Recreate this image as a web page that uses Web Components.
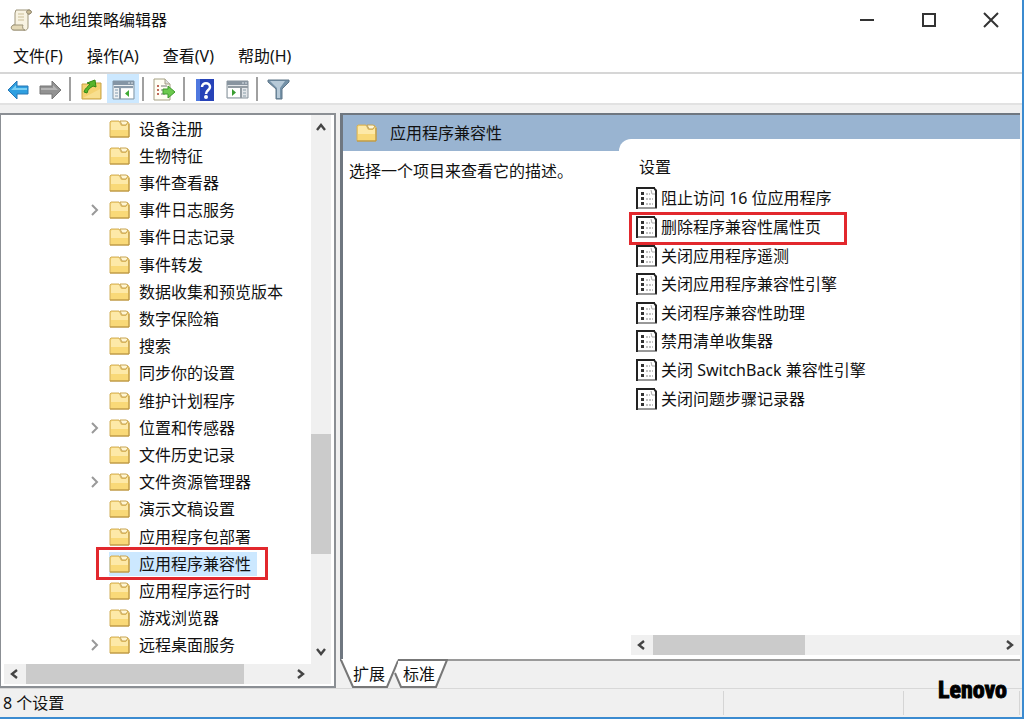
<!DOCTYPE html>
<html lang="zh-CN">
<head>
<meta charset="utf-8">
<title>本地组策略编辑器</title>
<style>
    body {
        margin: 0;
        font-family: 'Noto Sans', 'Noto Sans CJK SC', sans-serif;
        font-size: 16px;
        line-height: 24px;
        color: #111;
    }
</style>
</head>
<body>
<policy-window>
    <title-bar slot="title">本地组策略编辑器</title-bar>
    <menu-bar slot="menu"></menu-bar>
    <tool-bar slot="tools"></tool-bar>
    <tree-panel slot="tree">
        <tree-item>设备注册</tree-item>
        <tree-item>生物特征</tree-item>
        <tree-item>事件查看器</tree-item>
        <tree-item expandable>事件日志服务</tree-item>
        <tree-item>事件日志记录</tree-item>
        <tree-item>事件转发</tree-item>
        <tree-item>数据收集和预览版本</tree-item>
        <tree-item>数字保险箱</tree-item>
        <tree-item>搜索</tree-item>
        <tree-item>同步你的设置</tree-item>
        <tree-item>维护计划程序</tree-item>
        <tree-item expandable>位置和传感器</tree-item>
        <tree-item>文件历史记录</tree-item>
        <tree-item expandable>文件资源管理器</tree-item>
        <tree-item>演示文稿设置</tree-item>
        <tree-item>应用程序包部署</tree-item>
        <tree-item selected>应用程序兼容性</tree-item>
        <tree-item>应用程序运行时</tree-item>
        <tree-item>游戏浏览器</tree-item>
        <tree-item expandable>远程桌面服务</tree-item>
    </tree-panel>
    <detail-panel slot="detail">
        <span slot="heading">应用程序兼容性</span>
        <span slot="description">选择一个项目来查看它的描述。</span>
        <span slot="column">设置</span>
        <setting-item>阻止访问 16 位应用程序</setting-item>
        <setting-item marked>删除程序兼容性属性页</setting-item>
        <setting-item>关闭应用程序遥测</setting-item>
        <setting-item>关闭应用程序兼容性引擎</setting-item>
        <setting-item>关闭程序兼容性助理</setting-item>
        <setting-item>禁用清单收集器</setting-item>
        <setting-item>关闭 SwitchBack 兼容性引擎</setting-item>
        <setting-item>关闭问题步骤记录器</setting-item>
    </detail-panel>
    <status-bar slot="status">8 个设置</status-bar>
</policy-window>

<script>
const folderIcon = `
    <svg width="22" height="20" viewBox="0 0 22 20" aria-hidden="true">
        <path d="M1 3l1-1h8l2 4h5l1-3 2 1v14H1z" fill="#f9d978" stroke="#d3b05c"/>
        <path d="M11 2h6l2 1-2 3h-4z" fill="#fff6d4" stroke="#c9a44f"/>
        <path d="M2 4l1-1h7l2 4h5l2-2v6H2z" fill="#fde9a8"/>
        <path d="M1 18h19V5" stroke="#b8923f" fill="none"/>
    </svg>`;

const arrowPaths = {
    up: 'M2 8l4-5 4 5',
    down: 'M2 4l4 5 4-5',
    left: 'M8 2L3 6l5 4',
    right: 'M4 2l5 4-5 4'
};

function arrowIcon(dir) {
    return `<svg width="12" height="12" viewBox="0 0 12 12" aria-hidden="true"><path d="${arrowPaths[dir]}" fill="none" stroke="#444" stroke-width="2.4"/></svg>`;
}

function render(el, html) {
    const template = document.createElement('template');
    template.innerHTML = html;
    el.attachShadow({ mode: 'open' });
    el.shadowRoot.appendChild(template.content.cloneNode(true));
}

class PolicyWindow extends HTMLElement {
    constructor() {
        super();
        render(this, `
            <style>
                :host {
                    display: flex;
                    flex-direction: column;
                    box-sizing: border-box;
                    min-height: 100vh;
                    background: #fff;
                    border-right: 2px solid #3b8bd0;
                    border-bottom: 2px solid #3b8bd0;
                }
                main {
                    flex: 1;
                    display: grid;
                    grid-template-columns: 336px 1fr;
                    gap: 4px;
                    padding: 8px 2px 0 0;
                    background: #f0f0f0;
                    border-top: 2px solid #e2e2e2;
                }
            </style>
            <slot name="title"></slot>
            <slot name="menu"></slot>
            <slot name="tools"></slot>
            <main>
                <slot name="tree"></slot>
                <slot name="detail"></slot>
            </main>
            <slot name="status"></slot>
        `);
    }
}

class TitleBar extends HTMLElement {
    constructor() {
        super();
        render(this, `
            <style>
                :host {
                    display: flex;
                    align-items: center;
                    height: 40px;
                    padding-left: 10px;
                }
                h1 {
                    flex: 1;
                    margin: 0 0 0 6px;
                    font-size: 16px;
                    font-weight: normal;
                }
                button {
                    width: 62px;
                    height: 38px;
                    padding: 0;
                    border: 0;
                    background: none;
                }
                button svg { display: block; margin: auto; }
            </style>
            <svg width="23" height="22" viewBox="0 0 23 22" aria-hidden="true">
                <path d="M6 1h13c3 0 3 4 0 4h-1v13c0 3-3 4-5 3H4c-4 0-3-5 0-5h1V4z" fill="#f8f3e2" stroke="#9d9479"/>
                <path d="M18 5c-2-1-2-4 1-4 3 0 3 4 0 4z" fill="#c9bb95" stroke="#8d846b"/>
                <path d="M4 16h9c-1 2 0 5 2 5H4c-4 0-3-5 0-5z" fill="#e4d9b7" stroke="#9d9479"/>
                <path d="M8 5h6M8 8h6M8 11h6" stroke="#cbbf99"/>
            </svg>
            <h1><slot></slot></h1>
            <button aria-label="最小化"><svg width="16" height="16" viewBox="0 0 16 16"><path d="M1 8h14" stroke="#333" stroke-width="2"/></svg></button>
            <button aria-label="最大化"><svg width="16" height="16" viewBox="0 0 16 16"><path d="M2 2h12v12H2z" fill="none" stroke="#333" stroke-width="2"/></svg></button>
            <button aria-label="关闭"><svg width="16" height="16" viewBox="0 0 16 16"><path d="M1 1l14 14M15 1L1 15" stroke="#333" stroke-width="2"/></svg></button>
        `);
    }
}

class MenuBar extends HTMLElement {
    constructor() {
        super();
        render(this, `
            <style>
                :host { display: block; }
                nav {
                    display: flex;
                    gap: 24px;
                    height: 32px;
                    padding-left: 13px;
                    border-bottom: 2px solid #d6d6d6;
                }
                button {
                    padding: 0;
                    height: 32px;
                    border: 0;
                    background: none;
                    font: inherit;
                    color: inherit;
                }
            </style>
            <nav>
                <button>文件(F)</button>
                <button>操作(A)</button>
                <button>查看(V)</button>
                <button>帮助(H)</button>
            </nav>
        `);
    }
}

class ToolBar extends HTMLElement {
    constructor() {
        super();
        render(this, `
            <style>
                :host {
                    display: flex;
                    align-items: center;
                    height: 29px;
                    padding-left: 2px;
                }
                button {
                    display: grid;
                    place-items: center;
                    width: 32px;
                    height: 29px;
                    padding: 2px 0 0;
                    border: 0;
                    background: none;
                }
                button.active { background: #cce8ff; }
                i {
                    width: 2px;
                    height: 24px;
                    margin: 0 4px 0 3px;
                    background: #a0a0a0;
                }
            </style>
            <button aria-label="后退"><svg width="22" height="20" viewBox="0 0 22 20"><path d="M1 10l9-9v5h11v8H10v5z" fill="#2f9fe0" stroke="#2777b5"/><path d="M4 10l5-5v3h11v2z" fill="#7bd0f5"/></svg></button>
            <button aria-label="前进"><svg width="23" height="20" viewBox="0 0 23 20"><path d="M22 10l-9-9v5H1v8h12v5z" fill="#929292" stroke="#777"/><path d="M19 10l-5-5v3H2v2z" fill="#b5b5b5"/></svg></button>
            <i></i>
            <button aria-label="上移一级"><svg width="21" height="21" viewBox="0 0 21 21"><path d="M1 5h8l2 2 3-3h6v16H1z" fill="#f4d271" stroke="#c7a349"/><path d="M2 19L19 10v9z" fill="#f8df8f"/><path d="M3 13c1-4 4-5 6-8L6 4l8-3 1 7-3-1c-3 2-5 3-6 7z" fill="#57b52b" stroke="#338915"/></svg></button>
            <button class="active" aria-label="显示控制台树"><svg width="23" height="21" viewBox="0 0 23 21"><path d="M1 2h21v18H1z" fill="#eef1f3" stroke="#8196a6"/><path d="M1 2h21v4H1z" fill="#8495a5"/><path d="M16 4h2M19 4h2" stroke="#dce4ea"/><path d="M2 8h19M8 8v12" stroke="#8b9baa" stroke-width="2"/><path d="M3 11h3M3 14h3M3 17h3" stroke="#819bb1"/><path d="M9 10h12v9H9z" fill="#fff"/><path d="M17 11v7l-4-3.500z" fill="#3eaa35"/></svg></button>
            <i></i>
            <button aria-label="导出列表"><svg width="24" height="23" viewBox="0 0 24 23"><path d="M2 1h11l5 5v16H2z" fill="#fffef3" stroke="#a5a084"/><path d="M13 1v5h5" fill="#ddd" stroke="#a5a084"/><path d="M5 8h2M5 12h2M5 16h2" stroke="#c06a5a" stroke-width="2"/><path d="M9 8h6M9 12h4M9 16h4" stroke="#777"/><path d="M11 11h5V8l7 6-7 6v-4h-5z" fill="#6cc94e" stroke="#3f9a2d"/></svg></button>
            <i></i>
            <button aria-label="帮助"><svg width="18" height="22" viewBox="0 0 18 22"><path d="M0 0h18v22H0z" fill="#2743b8"/><path d="M0 0h4v22H0z" fill="#4f78df"/><path d="M6 8c0-5 8-5 8 0 0 3-4 3-4 7" fill="none" stroke="#fff" stroke-width="2.500"/><circle cx="10" cy="18" r="2" fill="#fff"/></svg></button>
            <button aria-label="显示操作窗格"><svg width="23" height="19" viewBox="0 0 23 19"><path d="M1 1h21v17H1z" fill="#e3e6e9" stroke="#87939b"/><path d="M1 1h21v4H1z" fill="#8995a0"/><path d="M16 3h2M19 3h2" stroke="#dce4ea"/><path d="M2 7h20M15 7v11" stroke="#929ba2" stroke-width="2"/><path d="M17 10h3M17 13h3M17 16h3" stroke="#899da8"/><path d="M2 8h12v9H2z" fill="#fff"/><path d="M6 9v7l4-3.500z" fill="#3b9d31"/></svg></button>
            <i></i>
            <button aria-label="筛选"><svg width="23" height="21" viewBox="0 0 23 21"><path d="M1 1h21v2l-7 7v10H9V10L1 3z" fill="#7592a8" stroke="#5f7789"/><path d="M3 2h15l-5 7v10h-3V9z" fill="#b7cad8"/></svg></button>
        `);
    }
}

class ScrollTrack extends HTMLElement {
    constructor() {
        super();
        const vertical = this.hasAttribute('vertical');
        const start = this.getAttribute('start');
        const size = this.getAttribute('size');
        render(this, `
            <style>
                :host {
                    display: flex;
                    flex-direction: ${vertical ? 'column' : 'row'};
                    background: #f0f0f0;
                }
                button {
                    display: grid;
                    place-items: center;
                    flex: 0 0 ${vertical ? 26 : 22}px;
                    padding: 0;
                    border: 0;
                    background: none;
                }
                .before { flex: ${start} 0 0; }
                .thumb { flex: ${size} 0 0; background: #cbcbcb; }
                .after { flex: ${100 - start - size} 0 0; }
            </style>
            <button aria-label="${vertical ? '向上滚动' : '向左滚动'}">${arrowIcon(vertical ? 'up' : 'left')}</button>
            <div class="before"></div>
            <div class="thumb"></div>
            <div class="after"></div>
            <button aria-label="${vertical ? '向下滚动' : '向右滚动'}">${arrowIcon(vertical ? 'down' : 'right')}</button>
        `);
    }
}

class TreePanel extends HTMLElement {
    constructor() {
        super();
        render(this, `
            <style>
                :host {
                    display: grid;
                    grid-template: 1fr 20px / 1fr 20px;
                    padding: 0 3px 2px 3px;
                    background: #fff;
                    border: 2px solid #8b8f94;
                    border-left-width: 1px;
                }
                .items {
                    display: grid;
                    grid-auto-rows: 1fr;
                    padding: 0 0 5px 84px;
                }
                .corner { background: #f0f0f0; }
            </style>
            <div class="items" role="tree"><slot></slot></div>
            <scroll-track vertical start="59" size="24"></scroll-track>
            <scroll-track start="0" size="83"></scroll-track>
            <div class="corner"></div>
        `);
    }
}

class TreeItem extends HTMLElement {
    constructor() {
        super();
        const toggle = this.hasAttribute('expandable')
            ? '<button class="toggle" aria-label="展开"><svg width="9" height="12" viewBox="0 0 9 12"><path d="M2 1l5 5-5 5" fill="none" stroke="#999" stroke-width="2"/></svg></button>'
            : '<span></span>';
        render(this, `
            <style>
                :host {
                    position: relative;
                    display: grid;
                    grid-template-columns: 21px max-content;
                    align-items: center;
                }
                button {
                    padding: 0;
                    border: 0;
                    background: none;
                    font: inherit;
                    color: inherit;
                }
                .toggle { display: flex; padding-left: 2px; }
                .label {
                    display: flex;
                    align-items: center;
                    gap: 8px;
                    padding-right: 6px;
                }
                :host([selected]) .label { background: #cce8ff; }
                :host([selected])::after {
                    content: '';
                    position: absolute;
                    left: 8px;
                    top: -3px;
                    bottom: -3px;
                    width: 166px;
                    border: 3px solid #e2282d;
                    pointer-events: none;
                }
            </style>
            ${toggle}
            <button class="label">${folderIcon}<slot></slot></button>
        `);
    }
    connectedCallback() {
        this.setAttribute('role', 'treeitem');
    }
}

class DetailPanel extends HTMLElement {
    constructor() {
        super();
        render(this, `
            <style>
                :host {
                    display: flex;
                    flex-direction: column;
                    min-width: 0;
                }
                .frame {
                    flex: 1;
                    display: grid;
                    grid-template: 24px 12px 1fr / 276px 1fr;
                    background: #fff;
                    border: 2px solid #6f7780;
                    border-width: 2px 0 2px 3px;
                    border-bottom-color: #9a9a9a;
                }
                .band {
                    grid-area: 1 / 1 / 3 / 3;
                    background: #99b4d1;
                }
                header {
                    grid-area: 1 / 1 / 3 / 2;
                    display: flex;
                    align-items: center;
                    gap: 12px;
                    padding-left: 13px;
                }
                h2 {
                    margin: 0;
                    font-size: 16px;
                    font-weight: normal;
                }
                p {
                    grid-area: 3 / 1;
                    margin: 8px 0 0 6px;
                }
                section {
                    grid-area: 2 / 2 / 4 / 3;
                    display: flex;
                    flex-direction: column;
                    padding-bottom: 4px;
                    background: #fff;
                    border-top-left-radius: 12px;
                }
                .column { margin: 16px 0 5px 20px; }
                .list {
                    display: grid;
                    grid-auto-rows: 1fr;
                    height: 229px;
                    margin-bottom: auto;
                    padding-left: 17px;
                }
                scroll-track { height: 20px; margin-left: 12px; }
                nav { display: flex; height: 27px; }
                nav button {
                    position: relative;
                    width: 58px;
                    padding: 0 0 2px;
                    border: 0;
                    background: none;
                    font: inherit;
                    color: inherit;
                }
                nav button + button { width: 50px; margin-left: -4px; }
                nav svg { position: absolute; left: 0; top: -2px; }
                nav span { position: relative; }
            </style>
            <div class="frame">
                <div class="band"></div>
                <header>${folderIcon}<h2><slot name="heading"></slot></h2></header>
                <p><slot name="description"></slot></p>
                <section>
                    <div class="column"><slot name="column"></slot></div>
                    <div class="list"><slot></slot></div>
                    <scroll-track start="0" size="44"></scroll-track>
                </section>
            </div>
            <nav>
                <button><svg width="58" height="29" viewBox="0 0 58 29"><path d="M1 0l12 28h34L58 0z" fill="#fff"/><path d="M1 1l12 27h34L58 2" fill="none" stroke="#777" stroke-width="2"/></svg><span>扩展</span></button>
                <button><svg width="54" height="29" viewBox="0 0 54 29"><path d="M5 1L1 14l6 14h35L53 1z" fill="#fff"/><path d="M1 14l6 14h35L53 1H4" fill="none" stroke="#777" stroke-width="2"/></svg><span>标准</span></button>
            </nav>
        `);
    }
}

class SettingItem extends HTMLElement {
    constructor() {
        super();
        render(this, `
            <style>
                :host {
                    position: relative;
                    display: flex;
                }
                button {
                    display: flex;
                    align-items: center;
                    gap: 3px;
                    padding: 0;
                    border: 0;
                    background: none;
                    font: inherit;
                    color: inherit;
                    white-space: nowrap;
                }
                :host([marked])::after {
                    content: '';
                    position: absolute;
                    left: -7px;
                    top: -1px;
                    width: 212px;
                    height: 27px;
                    border: 3px solid #e2282d;
                    pointer-events: none;
                }
            </style>
            <button>
                <svg width="22" height="22" viewBox="0 0 22 22" aria-hidden="true">
                    <path d="M1 1h20v20H1z" fill="#fff"/>
                    <path d="M1 22V1h18M20 4v17" fill="none" stroke="#222" stroke-width="2"/>
                    <path d="M1 21h20" stroke="#333"/>
                    <path d="M17 1h2l2 2v4z" fill="#222"/>
                    <path d="M15 3l1 4h3" fill="none" stroke="#aaa"/>
                    <path d="M5 5h3v3H5zM5 10h3v3H5zM5 15h3v3H5z" fill="#333"/>
                    <path d="M10 7h4M10 12h7M10 17h7" stroke="#888" stroke-dasharray="2 1"/>
                </svg>
                <span><slot></slot></span>
            </button>
        `);
    }
}

class StatusBar extends HTMLElement {
    constructor() {
        super();
        render(this, `
            <style>
                :host {
                    position: relative;
                    display: grid;
                    grid-template-columns: 1fr 180px 116px;
                    height: 28px;
                    padding: 0 2px 0 0;
                    background: #f0f0f0;
                    border-top: 1px solid #d8d8d8;
                }
                div {
                    margin: 2px 0;
                    padding-left: 3px;
                    border-right: 1px solid #d5d5d5;
                }
                strong {
                    position: absolute;
                    right: 15px;
                    bottom: 13px;
                    font: bold 24px/28px 'Roboto Condensed', 'Open Sans Condensed', 'DejaVu Sans Condensed', 'Liberation Sans', sans-serif;
                    color: #000;
                    -webkit-text-stroke: 1px #000;
                }
            </style>
            <div><slot></slot></div>
            <div></div>
            <div></div>
            <strong>Lenovo</strong>
        `);
    }
}

window.customElements.define('scroll-track', ScrollTrack);
window.customElements.define('policy-window', PolicyWindow);
window.customElements.define('title-bar', TitleBar);
window.customElements.define('menu-bar', MenuBar);
window.customElements.define('tool-bar', ToolBar);
window.customElements.define('tree-panel', TreePanel);
window.customElements.define('tree-item', TreeItem);
window.customElements.define('detail-panel', DetailPanel);
window.customElements.define('setting-item', SettingItem);
window.customElements.define('status-bar', StatusBar);
</script>
</body>
</html>
